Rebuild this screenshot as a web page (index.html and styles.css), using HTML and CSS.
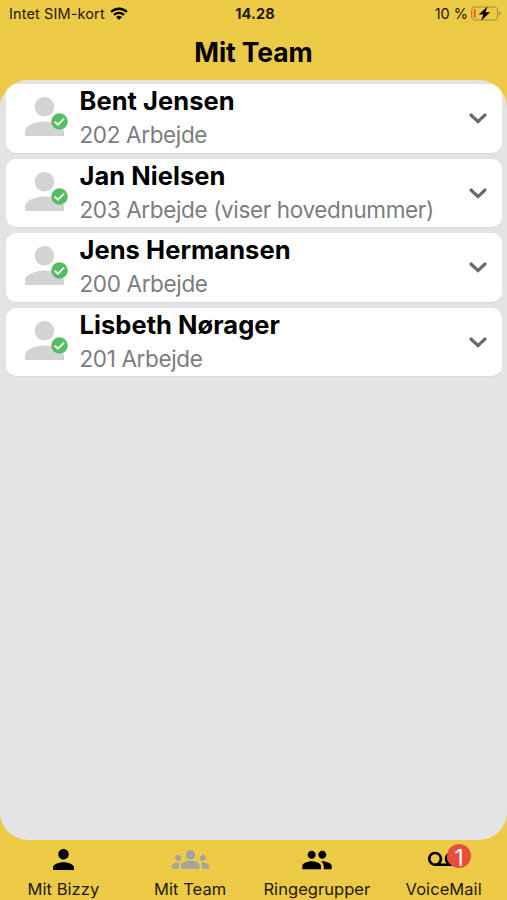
FILE: index.html
```html
<!DOCTYPE html>
<html lang="da">

<head>
  <meta charset="UTF-8" />
  <meta name="viewport" content="width=device-width, initial-scale=1.0" />
  <title>Mit Team</title>
  <link rel="stylesheet" href="styles.css">
</head>

<body>
  <!-- Shared icons -->
  <svg class="icon-defs" aria-hidden="true">
    <symbol id="person" viewBox="4 4 16 16">
      <path d="M12 12c2.21 0 4-1.79 4-4s-1.79-4-4-4-4 1.79-4 4 1.79 4 4 4zm0 2c-2.67 0-8 1.34-8 4v2h16v-2c0-2.66-5.33-4-8-4z" />
    </symbol>
    <symbol id="check" viewBox="0 0 17 17">
      <circle cx="8.5" cy="8.5" r="8.3" fill="#57bd62" />
      <path d="M3.6 8.6l3.3 3.1 6.3-6.2" fill="none" stroke="#fff" stroke-width="1.7" />
    </symbol>
    <symbol id="chevron" viewBox="0 0 18 11">
      <path d="M2 2l7 6.6L16 2" fill="none" stroke="#69696c" stroke-width="3.1" stroke-linecap="round" />
    </symbol>
  </svg>

  <div class="app">
    <div class="status-bar">
      <div class="carrier">
        <span class="carrier-name">Intet SIM-kort</span>
        <svg class="wifi" viewBox="0 0 18 13">
          <path d="M1.1 5a11.2 11.2 0 0 1 15.8 0M4 8a7.1 7.1 0 0 1 10 0" fill="none" stroke="#000" stroke-width="2.3" />
          <path d="M9 13l-2.9-2.9a4.1 4.1 0 0 1 5.8 0z" />
        </svg>
      </div>
      <span class="clock">14.28</span>
      <div class="power">
        <span class="percent">10 %</span>
        <svg class="battery" viewBox="0 0 30 15">
          <rect x=".6" y="1" width="26" height="13" rx="3.6" fill="none" stroke="#a28d39" stroke-width="1.1" />
          <path d="M28.2 5.5c2 .8 2 3.2 0 4z" fill="#a28d39" />
          <rect x="2.7" y="3.3" width="2" height="8.4" rx=".8" fill="#f1533d" />
          <path d="M16.5.4L7.7 8.5h4.6l-2.2 6.2 9-8.4h-4.7z" />
        </svg>
      </div>
    </div>

    <h1>Mit Team</h1>

    <main class="team">
      <div class="member">
        <div class="avatar">
          <svg class="avatar-icon"><use href="#person" /></svg>
          <svg class="presence"><use href="#check" /></svg>
        </div>
        <div class="info">
          <h2>Bent Jensen</h2>
          <p>202 Arbejde</p>
        </div>
        <svg class="chevron"><use href="#chevron" /></svg>
      </div>

      <div class="member">
        <div class="avatar">
          <svg class="avatar-icon"><use href="#person" /></svg>
          <svg class="presence"><use href="#check" /></svg>
        </div>
        <div class="info">
          <h2>Jan Nielsen</h2>
          <p>203 Arbejde (viser hovednummer)</p>
        </div>
        <svg class="chevron"><use href="#chevron" /></svg>
      </div>

      <div class="member">
        <div class="avatar">
          <svg class="avatar-icon"><use href="#person" /></svg>
          <svg class="presence"><use href="#check" /></svg>
        </div>
        <div class="info">
          <h2>Jens Hermansen</h2>
          <p>200 Arbejde</p>
        </div>
        <svg class="chevron"><use href="#chevron" /></svg>
      </div>

      <div class="member">
        <div class="avatar">
          <svg class="avatar-icon"><use href="#person" /></svg>
          <svg class="presence"><use href="#check" /></svg>
        </div>
        <div class="info">
          <h2>Lisbeth Nørager</h2>
          <p>201 Arbejde</p>
        </div>
        <svg class="chevron"><use href="#chevron" /></svg>
      </div>
    </main>

    <nav class="tabs">
      <div class="tab">
        <div class="tab-icon">
          <svg class="icon-person"><use href="#person" /></svg>
        </div>
        <span>Mit Bizzy</span>
      </div>
      <div class="tab active">
        <div class="tab-icon">
          <svg class="icon-groups" viewBox="0 0 24 24">
            <path d="M12 12.75c1.63 0 3.07.39 4.24.9 1.08.48 1.76 1.56 1.76 2.73V18H6v-1.61c0-1.18.68-2.26 1.76-2.73 1.17-.52 2.61-.91 4.24-.91zM4 13c1.1 0 2-.9 2-2s-.9-2-2-2-2 .9-2 2 .9 2 2 2zm1.13 1.1c-.37-.06-.74-.1-1.13-.1-.99 0-1.93.21-2.78.58C.48 14.9 0 15.62 0 16.43V18h4.5v-1.61c0-.83.23-1.61.63-2.29zM20 13c1.1 0 2-.9 2-2s-.9-2-2-2-2 .9-2 2 .9 2 2 2zm4 3.43c0-.81-.48-1.53-1.22-1.85-.85-.37-1.79-.58-2.78-.58-.39 0-.76.04-1.13.1.4.68.63 1.46.63 2.29V18H24v-1.57zM12 6c1.66 0 3 1.34 3 3s-1.34 3-3 3-3-1.34-3-3 1.34-3 3-3z" />
          </svg>
        </div>
        <span>Mit Team</span>
      </div>
      <div class="tab">
        <div class="tab-icon">
          <svg class="icon-people" viewBox="0 0 24 24">
            <path d="M16 11c1.66 0 2.99-1.34 2.99-3S17.66 5 16 5s-3 1.34-3 3 1.34 3 3 3zm-8 0c1.66 0 2.99-1.34 2.99-3S9.66 5 8 5 5 6.34 5 8s1.34 3 3 3zm0 2c-2.33 0-7 1.17-7 3.5V19h14v-2.5c0-2.33-4.67-3.5-7-3.5zm8 0c-.29 0-.62.02-.97.05 1.16.84 1.97 1.97 1.97 3.45V19h6v-2.5c0-2.33-4.67-3.5-7-3.5z" />
          </svg>
        </div>
        <span>Ringegrupper</span>
      </div>
      <div class="tab">
        <div class="tab-icon">
          <svg class="icon-voicemail" viewBox="0 0 24 24">
            <path d="M18.5 6C15.46 6 13 8.46 13 11.5c0 1.33.47 2.55 1.26 3.5H9.74c.79-.95 1.26-2.17 1.26-3.5C11 8.46 8.54 6 5.5 6S0 8.46 0 11.5 2.46 17 5.5 17h13c3.04 0 5.5-2.46 5.5-5.5S21.54 6 18.5 6zm-13 9C3.57 15 2 13.43 2 11.5S3.57 8 5.5 8 9 9.57 9 11.5 7.43 15 5.5 15zm13 0c-1.93 0-3.5-1.57-3.5-3.5S16.57 8 18.5 8 22 9.57 22 11.5 20.43 15 18.5 15z" />
          </svg>
          <span class="badge">1</span>
        </div>
        <span>VoiceMail</span>
      </div>
    </nav>
  </div>
</body>

</html>
```
FILE: styles.css
```css
* {
  box-sizing: border-box;
}

body {
  margin: 0;
  background-color: #edca46;
  color: #000;
  font-family: Inter, "Liberation Sans", sans-serif;
}

svg {
  display: block;
}

h1,
h2,
p {
  margin: 0;
  white-space: nowrap;
}

.icon-defs {
  display: none;
}

.app {
  display: flex;
  flex-direction: column;
  height: 900px;
  overflow: hidden;
}

/* Status bar */

.status-bar {
  display: grid;
  grid-template-columns: 1fr auto 1fr;
  align-items: center;
  height: 27px;
  padding: 0 6px 0 9px;
  font-size: 14.5px;
  color: #1c1804;
}

.carrier,
.power {
  display: flex;
  align-items: center;
}

.carrier {
  gap: 5px;
}

.carrier-name {
  letter-spacing: 0.12px;
}

.power {
  justify-content: flex-end;
  gap: 3px;
}

.wifi {
  width: 18px;
  height: 13px;
  margin-top: -1px;
}

.battery {
  width: 30px;
  height: 15px;
}

.clock {
  font-weight: 700;
  letter-spacing: 0.15px;
}

h1 {
  height: 52px;
  line-height: 51px;
  font-size: 26.5px;
  font-weight: 700;
  letter-spacing: -0.1px;
  text-align: center;
}

/* Team list */

.team {
  flex: 1;
  display: flex;
  flex-direction: column;
  gap: 6px;
  margin-top: .5px;
  padding: 4.5px 5px 0 6px;
  border-radius: 28px;
  background-color: #e4e4e6;
  overflow: hidden;
}

.member {
  display: flex;
  align-items: center;
  height: 68.5px;
  padding: 0 15.5px 0 19px;
  border-radius: 10px;
  background-color: #fff;
  box-shadow: 0 1px 1px rgba(0, 0, 0, 0.05);
}

.avatar {
  position: relative;
  width: 39px;
  height: 39px;
  margin-top: -3px;
}

.avatar-icon {
  width: 39px;
  height: 39px;
  fill: #d3d3d3;
}

.presence {
  position: absolute;
  top: 16px;
  left: 26px;
  width: 17px;
  height: 17px;
}

.info {
  flex: 1;
  padding-left: 15.5px;
}

h2 {
  font-size: 25.5px;
  font-weight: 700;
  line-height: 34px;
  letter-spacing: 0.05px;
}

p {
  font-size: 22.5px;
  line-height: 34px;
  letter-spacing: -0.36px;
  color: #7c7c80;
}

.chevron {
  width: 18px;
  height: 11px;
  margin-top: 1px;
}

/* Bottom tabs */

.tabs {
  display: grid;
  grid-template-columns: repeat(4, 1fr);
  height: 60px;
}

.tab {
  display: flex;
  flex-direction: column;
  align-items: center;
  font-size: 16.5px;
  line-height: 20px;
  letter-spacing: 0.05px;
  color: #1c1804;
}

.tab-icon {
  position: relative;
  display: flex;
  align-items: center;
  justify-content: center;
  height: 39px;
  fill: #000;
}

.active .tab-icon {
  fill: #a3a3a3;
}

.icon-person {
  width: 21px;
  height: 21px;
}

.icon-groups {
  width: 37px;
  height: 37px;
}

.icon-people {
  width: 32px;
  height: 32px;
}

.icon-voicemail {
  width: 31px;
  height: 31px;
}

.badge {
  position: absolute;
  top: 4px;
  right: -12px;
  width: 24px;
  height: 24px;
  border-radius: 50%;
  background-color: #e64f3e;
  color: #fff;
  font-size: 22.5px;
  font-weight: 400;
  line-height: 28px;
  text-align: center;
}
```
